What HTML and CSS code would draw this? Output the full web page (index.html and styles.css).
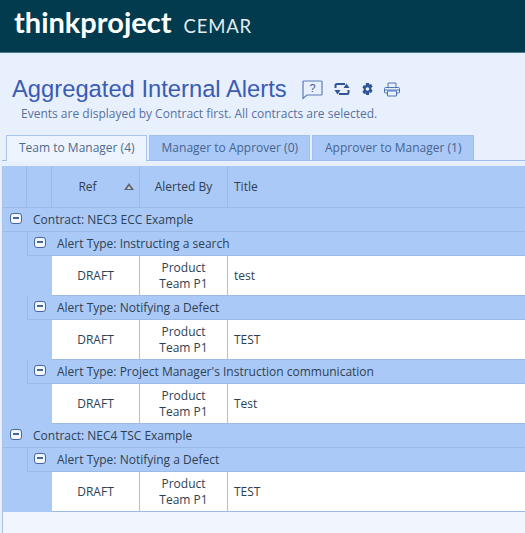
FILE: index.html
```html
<!DOCTYPE html>
<html lang="en">
<head>
<meta charset="utf-8">
<title>Aggregated Internal Alerts</title>
<link rel="stylesheet" href="styles.css">
</head>
<body>
<header class="brand">
  <span class="logo">thinkproject</span>
  <span class="product">CEMAR</span>
</header>
<main class="page">
  <div class="title-row">
    <h1 class="title">Aggregated Internal Alerts</h1>
    <svg class="icon help" width="22" height="20" viewBox="0 0 22 20"><path d="M3 1h17a1 1 0 0 1 1 1v12a1 1 0 0 1-1 1H6l-4 3.500V2a1 1 0 0 1 1-1z" fill="none" stroke="#5b7cb8" stroke-width="1.200"/><text x="11.500" y="12" font-family="Liberation Sans" font-size="11" fill="#34589c" text-anchor="middle">?</text></svg>
    <svg class="icon sync" width="16" height="14" viewBox="0 0 16 14" fill="none" stroke="#2f5597" stroke-width="2"><path d="M1.500 6V3.500a1.500 1.500 0 0 1 1.500-1.500h8"/><path d="M14.500 8v2.500a1.500 1.500 0 0 1-1.500 1.500H5"/><path d="M9.500 6h6L12.500 1.500zM6.500 8h-6L3.500 12.500z" fill="#2f5597" stroke="none"/></svg>
    <svg class="icon gear" width="11" height="12" viewBox="0 0 11 12"><path d="M4 0h3l.4 1.700 1.700-.6 1.500 2.500-1.300 1.200v1.400l1.300 1.200-1.500 2.500-1.700-.6L7 12H4l-.4-1.700-1.700.6L.4 8.400l1.300-1.200V5.800L.4 4.600l1.500-2.500 1.700.6z" fill="#2f5597"/><circle cx="5.500" cy="6" r="1.800" fill="#e9f0fd"/></svg>
    <svg class="icon print" width="16" height="15" viewBox="0 0 16 15" fill="none" stroke="#4f74b3" stroke-width="1"><path d="M4 5V1h8v4M3.500 11H1.500a1 1 0 0 1-1-1V6.500a1 1 0 0 1 1-1h13a1 1 0 0 1 1 1V10a1 1 0 0 1-1 1h-2"/><path d="M3.500 9h9v5h-9zM1 8h14"/></svg>
  </div>
  <p class="note">Events are displayed by Contract first. All contracts are selected.</p>

  <nav class="tabs">
    <span class="tab active">Team to Manager (4)</span>
    <span class="tab">Manager to Approver (0)</span>
    <span class="tab">Approver to Manager (1)</span>
  </nav>

  <section class="grid">
    <div class="head">
      <span class="hcell c-a"></span>
      <span class="hcell c-b"></span>
      <span class="hcell c-ref head-ref">Ref<i class="sort"></i></span>
      <span class="hcell c-by">Alerted By</span>
      <span class="hcell c-title">Title</span>
    </div>

    <div class="group"><b class="toggle"></b>Contract: NEC3 ECC Example</div>
    <div class="nest">
      <div class="subgroup"><b class="toggle"></b>Alert Type: Instructing a search</div>
      <div class="row"><span class="cell c-ref">DRAFT</span><span class="cell c-by">Product<br>Team P1</span><span class="cell c-title">test</span></div>
      <div class="subgroup"><b class="toggle"></b>Alert Type: Notifying a Defect</div>
      <div class="row"><span class="cell c-ref">DRAFT</span><span class="cell c-by">Product<br>Team P1</span><span class="cell c-title">TEST</span></div>
      <div class="subgroup"><b class="toggle"></b>Alert Type: Project Manager's Instruction communication</div>
      <div class="row"><span class="cell c-ref">DRAFT</span><span class="cell c-by">Product<br>Team P1</span><span class="cell c-title">Test</span></div>
    </div>

    <div class="group"><b class="toggle"></b>Contract: NEC4 TSC Example</div>
    <div class="nest">
      <div class="subgroup"><b class="toggle"></b>Alert Type: Notifying a Defect</div>
      <div class="row"><span class="cell c-ref">DRAFT</span><span class="cell c-by">Product<br>Team P1</span><span class="cell c-title">TEST</span></div>
    </div>
  </section>
</main>
</body>
</html>
```
FILE: styles.css
```css
* { box-sizing: border-box; }
html, body { margin: 0; height: 100%; overflow: hidden; }
body {
  background: #e9f0fd;
  color: #2e3f52;
  font-family: "Open Sans", "Noto Sans", sans-serif;
  font-size: 12px;
}
.brand {
  height: 53px;
  background: #023a4e;
  border-bottom: 1px solid #4d7a8e;
  padding: 0 0 0 14px;
  display: flex;
  align-items: baseline;
  line-height: 44px;
  color: #fff;
}
.logo { font-family: Lato, sans-serif; font-weight: 700; font-size: 29px; }
.product { font-family: Lato, sans-serif; font-size: 18.500px; margin-left: 12px; letter-spacing: .8px; color: #e4ecef; }
.page { padding: 22px 0 0 2px; }
.title-row { display: flex; align-items: center; height: 28px; padding-left: 10px; }
.title {
  margin: 0;
  font: 400 23.750px "Liberation Sans", Arial, sans-serif;
  color: #3a5cb5;
}
.icon { flex: none; display: block; }
.help { margin-left: 14px; margin-top: 1px; }
.sync { margin-left: 11px; }
.gear { margin-left: 12px; }
.print { margin-left: 11px; }
.note { margin: 2px 0 0 19px; line-height: 17px; font-size: 12px; color: #56709f; }
.tabs { display: flex; gap: 2px; margin-top: 13px; padding-left: 4px; height: 26px; border-bottom: 1px solid #9dbfee; }
.tab {
  height: 25px;
  padding: 0 11px 0 12px;
  line-height: 24px;
  font-size: 12px;
  background: #abc9f7;
  color: #45648f;
  border: 1px solid #a0c0f0;
  border-bottom: 0;
}
.tab.active { height: 26px; background: #eef4fe; color: #4d6b8f; border-color: #a9c6ef; }
.grid {
  margin-top: 5px;
  height: 367px;
  background: #f1f6fe;
  border-left: 1px solid #a9c3e8;
}
.head { display: flex; height: 42px; background: #abc9f7; border-bottom: 1px solid #9dbae6; }
.hcell {
  display: flex; align-items: center; justify-content: center;
  border-right: 1px solid #9dbae6;
  position: relative;
}
.head-ref { padding-right: 16px; }
.c-a { width: 24px; }
.c-b { width: 25px; }
.c-ref { width: 88px; flex: none; }
.c-by { width: 88px; flex: none; }
.c-title { flex: 1; justify-content: flex-start; padding-left: 6px; border-right: 0; }
.sort {
  position: absolute; right: 5px; top: 17px;
  width: 0; height: 0;
  border-left: 5px solid transparent;
  border-right: 5px solid transparent;
  border-bottom: 7px solid #5f6872;
}
.sort::after {
  content: ""; position: absolute; left: -2px; top: 3px;
  width: 0; height: 0;
  border-left: 2px solid transparent;
  border-right: 2px solid transparent;
  border-bottom: 3px solid #d5dbe0;
}
.group {
  height: 24px; display: flex; align-items: center;
  background: #abc9f7; border-bottom: 1px solid #9dbae6;
  padding-left: 7px;
}
.nest { padding-left: 24px; background: #abc9f7; }
.subgroup {
  height: 24px; display: flex; align-items: center;
  background: #abc9f7; border-bottom: 1px solid #9dbae6;
  border-left: 1px solid #9dbae6;
  padding-left: 6px;
}
.toggle {
  width: 12px; height: 11px; margin-right: 11px; margin-top: -3px;
  flex: none; display: flex; align-items: center; justify-content: center;
  background: #f2f6fd;
  border: 1.500px solid #47689e;
  border-radius: 3px;
}
.toggle::before { content: ""; width: 6px; height: 2px; background: #47689e; }
.row {
  height: 40px; display: flex;
  margin-left: 25px;
  background: #fff;
  border-bottom: 1px solid #9dbae6;
  line-height: 16px;
}
.cell {
  display: flex; align-items: center; justify-content: center; text-align: center;
  border-right: 1px solid #a9c3e8;
}
.cell.c-title { justify-content: flex-start; border-right: 0; text-align: left; }
```
